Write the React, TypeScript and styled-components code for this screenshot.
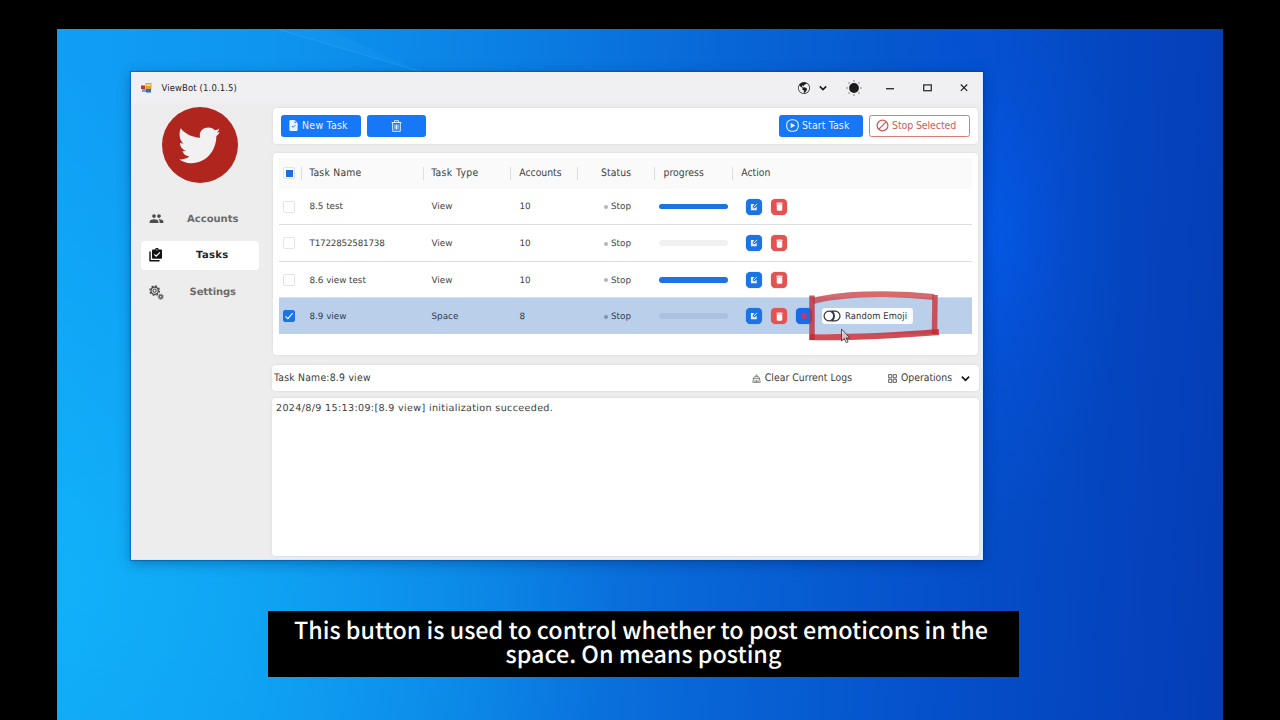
import React from "react";
import styled, { createGlobalStyle, css } from "styled-components";
import { MdGroup, MdDelete } from "react-icons/md";
import { BsGlobeAmericas, BsFileEarmarkCheckFill } from "react-icons/bs";

const Global = createGlobalStyle`
  *, *::before, *::after { box-sizing: border-box; }
  html, body { margin: 0; padding: 0; background: #000; overflow: hidden; }
  body { font-family: "DejaVu Sans", Verdana, sans-serif; text-rendering: geometricPrecision; }
  svg { display: block; flex: none; }
`;

const Screen = styled.div`
  width: 1280px;
  height: 720px;
  padding: 29px 57px 0;
  background: #000;
  overflow: hidden;
`;

const Desktop = styled.div`
  position: relative;
  height: 691px;
  overflow: hidden;
  background:
    radial-gradient(ellipse 130px 300px at 938px 200px, rgba(4, 96, 255, 0.5), rgba(4, 92, 250, 0.18) 50%, rgba(4, 80, 230, 0) 100%),
    radial-gradient(ellipse 560px 520px at 0 80%, rgba(18, 196, 255, 0.5), rgba(18, 190, 255, 0) 100%),
    linear-gradient(93deg, #109ff5 0%, #0e95ef 18%, #0b80e4 37%, #0866d6 56%, #0552cc 74%, #0447c1 87%, #043db5 100%);
`;

const LightBeam = styled.svg`
  position: absolute;
  left: 200px;
  top: 0;
`;

const AppWindow = styled.div`
  position: absolute;
  left: 74px;
  top: 43px;
  width: 852px;
  height: 488px;
  display: flex;
  flex-direction: column;
  background: #ededee;
  border-right: 1px solid #d5ecfa;
  border-bottom: 1px solid #cdeaf8;
  box-shadow: 0 0 1px 1px rgba(0, 60, 130, 0.35), 0 3px 12px rgba(0, 20, 80, 0.35);
  color: #3c3c3c;
`;

const TitleBar = styled.div`
  height: 31px;
  flex: none;
  display: flex;
  align-items: center;
  padding: 0 14px 0 10px;
  background: #f0f0f3;
  color: #1e1e1e;
`;

const Text = styled.span<{ $size?: number; $gap?: number; $condensed?: boolean; $bold?: boolean }>`
  white-space: nowrap;
  line-height: 1.2;
  font-size: ${(p) => p.$size ?? 8.8}px;
  letter-spacing: ${(p) => p.$gap ?? 0}px;
  font-weight: ${(p) => (p.$bold ? 700 : 400)};
  ${(p) => p.$condensed && css`font-family: "DejaVu Sans Condensed", "DejaVu Sans", sans-serif; font-stretch: condensed;`}
`;

const AppTitle = styled(Text)`
  margin-left: 9.5px;
  padding-top: 2px;
  flex: 1;
`;

const WindowControls = styled.div`
  display: flex;
  align-items: center;
  color: #1c1c1c;
`;

const Control = styled.span<{ $before: number }>`
  margin-left: ${(p) => p.$before}px;
`;

const Body = styled.div`
  flex: 1;
  display: flex;
  min-height: 0;
`;

const Sidebar = styled.nav`
  width: 141px;
  flex: none;
  padding: 4px 13px 0 10px;
`;

const Logo = styled.div`
  width: 76px;
  height: 76px;
  margin: 0 0 21px 20.5px;
  border-radius: 50%;
  background: #b0261e;
  color: #f1f1f1;
  display: grid;
  place-items: center;
`;

const NavItem = styled.div<{ $active?: boolean }>`
  height: 29px;
  margin-bottom: 7.8px;
  display: flex;
  align-items: center;
  padding-left: 8px;
  border-radius: 4px;
  background: ${(p) => (p.$active ? "#fff" : "transparent")};
  color: ${(p) => (p.$active ? "#1a1a1a" : "#4c4c4c")};
`;

const NavLabel = styled(Text)<{ $active?: boolean }>`
  flex: 1;
  text-align: center;
  padding: 2px 0 0 2.5px;
  color: ${(p) => (p.$active ? "#262626" : "#6c6c6c")};
`;

const Main = styled.main`
  flex: 1;
  min-width: 0;
  display: flex;
  flex-direction: column;
  padding: 5px 3px 3px 0;
`;

const Panel = styled.section`
  background: #fff;
  border-radius: 4px;
  box-shadow: 0 0 3px rgba(0, 0, 0, 0.1);
`;

const Toolbar = styled(Panel)`
  height: 36px;
  margin: 0 1px 9px 1px;
  display: flex;
  align-items: center;
  padding: 0 8px;
  gap: 6px;
`;

const Spacer = styled.div`
  flex: 1;
`;

const Button = styled.button<{ $width: number; $outline?: boolean }>`
  width: ${(p) => p.$width}px;
  height: 22px;
  display: flex;
  align-items: center;
  gap: 3px;
  padding: 0 0 1px 6px;
  border-radius: 2.5px;
  font-family: inherit;
  border: 1px solid ${(p) => (p.$outline ? "#dc7a78" : "#1677f5")};
  background: ${(p) => (p.$outline ? "#fff" : "#1677f7")};
  color: ${(p) => (p.$outline ? "#cf5b58" : "#e9f4ff")};
`;

const IconButton = styled(Button)`
  justify-content: center;
  padding: 0;
`;

const TablePanel = styled(Panel)`
  height: 202px;
  margin: 0 1px 10px 1px;
  padding: 5px 6px 0;
`;

const rowGrid = css`
  display: grid;
  grid-template-columns: 21.5px 122px 87.5px 67px 77px 77.5px 1fr;
  align-items: center;
`;

const HeadRow = styled.div`
  ${rowGrid}
  height: 30.6px;
  background: #fafafa;
`;

const Row = styled.div<{ $selected?: boolean }>`
  ${rowGrid}
  height: 36.6px;
  padding-top: 0.5px;
  border-bottom: 1px solid ${(p) => (p.$selected ? "#bad0ea" : "#dedede")};
  background: ${(p) => (p.$selected ? "#bad0ea" : "#fff")};
  color: ${(p) => (p.$selected ? "#303c50" : "#444")};
  &:last-child { height: 36px; }
`;

const HeadCell = styled.div<{ $pad?: number; $center?: boolean }>`
  height: 13px;
  display: flex;
  align-items: center;
  justify-content: ${(p) => (p.$center ? "center" : "flex-start")};
  padding-left: ${(p) => p.$pad ?? 7.7}px;
  border-left: 1px solid #dedede;
`;

const Cell = styled.div<{ $pad?: number }>`
  display: flex;
  align-items: center;
  padding-left: ${(p) => p.$pad ?? 9}px;
`;

const RowText = styled(Text)`
  padding-top: 2px;
`;

const CheckBox = styled.div<{ $checked?: boolean }>`
  width: 12px;
  height: 12px;
  margin-left: 4px;
  display: grid;
  place-items: center;
  border-radius: 2px;
  border: 1px solid ${(p) => (p.$checked ? "#1b74e4" : "#e4e4e4")};
  background: ${(p) => (p.$checked ? "#1b74e4" : "#fff")};
`;

const PartialMark = styled.div`
  width: 7px;
  height: 7px;
  background: #1b70de;
`;

const StatusDot = styled.i<{ $selected?: boolean }>`
  width: 4px;
  height: 4px;
  margin: 1px 3.5px 0 0;
  border-radius: 50%;
  background: ${(p) => (p.$selected ? "#7d93b2" : "#b4b4b4")};
`;

const Progress = styled.div<{ $full?: boolean; $selected?: boolean }>`
  width: 69px;
  height: 5.5px;
  border-radius: 3px;
  background: ${(p) => (p.$full ? "#1b74e2" : p.$selected ? "#abc2de" : "#f0f0f0")};
`;

const Action = styled.span<{ $color: string }>`
  width: 16px;
  height: 16px;
  margin-right: 9.2px;
  flex: none;
  display: grid;
  place-items: center;
  border-radius: 4.5px;
  background: ${(p) => p.$color};
  box-shadow: 0 0 1px ${(p) => p.$color};
  color: #fff;
`;

const EmojiToggle = styled.div`
  width: 91px;
  height: 16px;
  flex: none;
  display: flex;
  align-items: center;
  gap: 4px;
  padding-left: 1.5px;
  border-radius: 3px;
  background: #f9fbfe;
  color: #333;
`;

const LogHeader = styled(Panel)`
  height: 26px;
  margin-bottom: 7px;
  display: flex;
  align-items: center;
  padding: 0 9px 0 2px;
`;

const HeaderAction = styled.div<{ $after?: number }>`
  display: flex;
  align-items: center;
  gap: 4px;
  margin: 1px ${(p) => p.$after ?? 0}px 0 0;
`;

const LogBody = styled(Panel)`
  flex: 1;
  padding: 2px 4px;
  line-height: 12px;
`;

const Markup = styled.svg`
  position: absolute;
  left: 745px;
  top: 255px;
`;

const Caption = styled.p`
  position: absolute;
  left: 211px;
  top: 582px;
  width: 751px;
  height: 66px;
  margin: 0;
  padding-top: 6px;
  background: #000;
  color: #fff;
  font: 500 23.3px/24px "Noto Sans CJK SC", sans-serif;
  text-align: center;
  white-space: nowrap;
`;

const CaptionLine = styled.span<{ $trail?: number }>`
  display: block;
  height: 24px;
  padding-right: ${(p) => p.$trail ?? 0}px;
`;

const AppIcon = () => (
  <svg width="11" height="10" viewBox="0 0 11 10">
    <rect x="4.5" y="0" width="6" height="6.5" fill="#d9a52c" />
    <rect x="5.5" y="1" width="4" height="2" fill="#f8dc78" />
    <rect x="0" y="2.5" width="4" height="3.5" fill="#c0392e" />
    <rect x="1" y="6" width="4" height="3" fill="#77a4e6" />
    <rect x="5" y="6" width="5" height="3.5" fill="#3a68bd" />
  </svg>
);

const Bird = () => (
  <svg width="41" height="37" viewBox="148 175 124 111" fill="currentColor">
    <path d="M153 178C166 195 188 205 212 207C207 190 219 176 237 176C245 176 252 179 256 184C261 184 266 182 270 179C269 185 266 189 262 192L271 190C269 195 265 199 261 202C261 250 226 285 185 284C170 284 157 279 148 272C161 274 171 270 179 264C168 262 161 256 158 248L170 247C158 243 151 234 151 222L162 225C150 216 146 197 153 178Z" />
  </svg>
);

const Chevron = ({ size = 8 }: { size?: number }) => (
  <svg width={size} height={size} viewBox="0 0 8 8" fill="none" stroke="#151515" strokeWidth="1.5">
    <path d="M.8 2.4 4 5.6l3.2-3.2" />
  </svg>
);

const SunIcon = () => (
  <svg width="16" height="16" viewBox="0 0 16 16" fill="#1b1b1b">
    <circle cx="8" cy="8" r="4.9" />
    {[0, 45, 90, 135, 180, 225, 270, 315].map((a) => (
      <rect key={a} x="7.5" y=".4" width="1" height="1.2" opacity=".8" transform={`rotate(${a} 8 8)`} />
    ))}
  </svg>
);

const TasksIcon = () => (
  <svg width="14" height="14" viewBox="0 0 14 14">
    <path d="M1 3.6v9.2h9.6" fill="none" stroke="#111" strokeWidth="1.4" />
    <path d="M4 1.6h2.2a1.7 1.7 0 0 1 3.4 0H12a1 1 0 0 1 1 1v7.2a1 1 0 0 1-1 1H4a1 1 0 0 1-1-1V2.6a1 1 0 0 1 1-1z" fill="#111" />
    <circle cx="7.9" cy="1.9" r=".6" fill="#fff" />
    <path d="m5.3 6.3 1.9 1.9 3.7-3.8" fill="none" stroke="#fff" strokeWidth="1.2" />
  </svg>
);

const SettingsIcon = () => (
  <svg width="15" height="15" viewBox="0 0 16 16" fill="none" stroke="#4a4a4a">
    <circle cx="6" cy="6" r="3.9" strokeWidth="1.4" />
    <circle cx="6" cy="6" r="1.7" strokeWidth="1.1" />
    <circle cx="6" cy="6" r="5.1" strokeWidth="1.4" strokeDasharray="2 2" />
    <circle cx="12.5" cy="12.5" r="1.7" strokeWidth="1.8" stroke="#666" />
    <circle cx="12.5" cy="12.5" r="2.9" strokeWidth=".9" strokeDasharray="1.1 1.17" stroke="#666" />
  </svg>
);

const TrashOutline = () => (
  <svg width="11" height="12" viewBox="0 0 11 12" fill="none" stroke="currentColor">
    <path d="M.6 2.5h9.8M3.5 2.3V.7h4v1.6M1.7 2.5v8.8h7.600V2.5M4 4.5v5M5.5 4.5v5M7 4.5v5" strokeWidth=".95" />
  </svg>
);

const PlayIcon = () => (
  <svg width="13" height="13" viewBox="0 0 13 13" fill="none" stroke="currentColor">
    <rect x=".7" y=".7" width="11.6" height="11.6" rx="5" strokeWidth="1.1" />
    <path d="M4.6 3.7v5.6l4.7-2.8z" fill="currentColor" stroke="none" />
  </svg>
);

const StopIcon = () => (
  <svg width="13" height="13" viewBox="0 0 13 13" fill="none" stroke="currentColor" strokeWidth="1.3">
    <circle cx="6.5" cy="6.5" r="5.4" />
    <path d="m2.9 10.1 7.2-7.2" />
  </svg>
);

const EditIcon = () => (
  <svg width="8" height="8" viewBox="0 0 8 8">
    <path d="M.9 1h3.5L2.8 3v2.2H5l1.7-1.8v3.9H.9z" fill="#e9f3ff" />
    <path d="M3.6 4.4 7 .9" stroke="#e9f3ff" strokeWidth="1" />
  </svg>
);

const ToggleIcon = () => (
  <svg width="18" height="12" viewBox="0 0 18 12" fill="none" stroke="#333" strokeWidth="1.2">
    <circle cx="5.9" cy="6" r="4.8" />
    <path d="M9 1.2h3.2a4.8 4.8 0 0 1 0 9.6H9a6 6 0 0 0 0-9.6z" />
  </svg>
);

const ClearIcon = () => (
  <svg width="9" height="9" viewBox="0 0 10 10" fill="none" stroke="#555" strokeWidth=".8">
    <path d="M3.600 3 5 .8 6.400 3M1.400 5.200C1.600 3.700 2.500 3 4 3h2c1.500 0 2.400.7 2.600 2.200zM1.600 5.200.9 9.200h8.200l-.7-4M3.400 7v2.200M5 7v2.200M6.600 7v2.200" />
  </svg>
);

const GridIcon = () => (
  <svg width="9" height="9" viewBox="0 0 10 10" fill="none" stroke="#444" strokeWidth=".95">
    <path d="M.7.7h3.5v3.5H.7zM5.8.7h3.5v3.5H5.8zM.7 5.8h3.5v3.5H.7zM5.8 5.8h3.5v3.5H5.8z" />
  </svg>
);

interface Task {
  name: string;
  type: string;
  accounts: number;
  done?: boolean;
  selected?: boolean;
}

const tasks: Task[] = [
  { name: "8.5 test", type: "View", accounts: 10, done: true },
  { name: "T1722852581738", type: "View", accounts: 10 },
  { name: "8.6 view test", type: "View", accounts: 10, done: true },
  { name: "8.9 view", type: "Space", accounts: 8, selected: true },
];

const TaskRow = ({ task }: { task: Task }) => (
  <Row $selected={task.selected}>
    <CheckBox $checked={task.selected}>
      {task.selected && (
        <svg width="10" height="10" viewBox="0 0 10 10" fill="none" stroke="#fff" strokeWidth="1.1">
          <path d="m1.5 5.3 2.4 2.3L8.6 2.2" />
        </svg>
      )}
    </CheckBox>
    <Cell><RowText $gap={task.name.length > 13 ? -0.22 : -0.03}>{task.name}</RowText></Cell>
    <Cell><RowText>{task.type}</RowText></Cell>
    <Cell $pad={9.5}><RowText $gap={-0.2}>{task.accounts}</RowText></Cell>
    <Cell $pad={26.5}>
      <StatusDot $selected={task.selected} />
      <RowText>Stop</RowText>
    </Cell>
    <Cell $pad={5}><Progress $full={task.done} $selected={task.selected} /></Cell>
    <Cell $pad={14.5}>
      <Action $color="#1b74e4"><EditIcon /></Action>
      <Action $color="#e55252"><MdDelete size={11} /></Action>
      {task.selected && (
        <>
          <Action $color="#1b6ce4">
            <svg width="8" height="8" viewBox="0 0 8 8"><circle cx="4" cy="4" r="3" fill="#c43770" /></svg>
          </Action>
          <EmojiToggle>
            <ToggleIcon />
            <Text $size={9.3} $condensed $gap={0.13}>Random Emoji</Text>
          </EmojiToggle>
        </>
      )}
    </Cell>
  </Row>
);

const HeadText = ({ children, gap = 0.15 }: { children: string; gap?: number }) => (
  <Text $size={10.3} $condensed $gap={gap}>{children}</Text>
);

export default function App() {
  return (
    <Screen>
      <Global />
      <Desktop>
        <LightBeam width="220" height="45" viewBox="0 0 220 45">
          <path d="M20 0h50l95 43z" fill="#27a8fa" opacity=".14" />
          <path d="M20 0 165 43" stroke="#41b8ff" strokeWidth="1" opacity=".3" />
        </LightBeam>
        <AppWindow>
          <TitleBar>
            <AppIcon />
            <AppTitle $size={9.4} $condensed $gap={0.15}>ViewBot (1.0.1.5)</AppTitle>
            <WindowControls>
              <BsGlobeAmericas size={12} />
              <Control $before={9}><Chevron /></Control>
              <Control $before={18.5}><SunIcon /></Control>
              <Control $before={24.5}>
                <svg width="8" height="8" viewBox="0 0 8 8"><path d="M0 4.7h8" stroke="#333" strokeWidth="1.4" /></svg>
              </Control>
              <Control $before={28.5}>
                <svg width="9" height="8" viewBox="0 0 9 8"><rect x=".7" y=".9" width="7.6" height="5.8" fill="none" stroke="#333" strokeWidth="1.3" /></svg>
              </Control>
              <Control $before={28.5}>
                <svg width="8" height="8" viewBox="0 0 8 8"><path d="m.8.5 6.4 6.4m0-6.4L.8 6.9" stroke="#222" strokeWidth="1.2" /></svg>
              </Control>
            </WindowControls>
          </TitleBar>
          <Body>
            <Sidebar>
              <Logo><Bird /></Logo>
              <NavItem>
                <MdGroup size={15} />
                <NavLabel $size={10} $bold>Accounts</NavLabel>
              </NavItem>
              <NavItem $active>
                <TasksIcon />
                <NavLabel $size={10} $bold $active $gap={0.3}>Tasks</NavLabel>
              </NavItem>
              <NavItem>
                <SettingsIcon />
                <NavLabel $size={10} $bold $gap={-0.1}>Settings</NavLabel>
              </NavItem>
            </Sidebar>
            <Main>
              <Toolbar>
                <Button $width={80}>
                  <BsFileEarmarkCheckFill size={11} />
                  <Text $size={10.5} $condensed $gap={0.25}>New Task</Text>
                </Button>
                <IconButton $width={59}><TrashOutline /></IconButton>
                <Spacer />
                <Button $width={84}>
                  <PlayIcon />
                  <Text $size={10.5} $condensed $gap={0.12}>Start Task</Text>
                </Button>
                <Button $width={101} $outline>
                  <StopIcon />
                  <Text $size={10.5} $condensed $gap={-0.1}>Stop Selected</Text>
                </Button>
              </Toolbar>
              <TablePanel>
                <HeadRow>
                  <CheckBox><PartialMark /></CheckBox>
                  <HeadCell><HeadText gap={0.25}>Task Name</HeadText></HeadCell>
                  <HeadCell><HeadText gap={0.4}>Task Type</HeadText></HeadCell>
                  <HeadCell $pad={8.3}><HeadText gap={0}>Accounts</HeadText></HeadCell>
                  <HeadCell $center $pad={0}><HeadText gap={0.1}>Status</HeadText></HeadCell>
                  <HeadCell $pad={8.5}><HeadText gap={0.05}>progress</HeadText></HeadCell>
                  <HeadCell $pad={8.8}><HeadText gap={0}>Action</HeadText></HeadCell>
                </HeadRow>
                {tasks.map((t) => <TaskRow key={t.name} task={t} />)}
              </TablePanel>
              <LogHeader>
                <HeadText gap={0.25}>Task Name:8.9 view</HeadText>
                <Spacer />
                <HeaderAction $after={36}>
                  <ClearIcon />
                  <HeadText gap={0.06}>Clear Current Logs</HeadText>
                </HeaderAction>
                <HeaderAction>
                  <GridIcon />
                  <HeadText gap={0}>Operations</HeadText>
                  <Control $before={5}><Chevron size={9} /></Control>
                </HeaderAction>
              </LogHeader>
              <LogBody>
                <Text $size={9.6} $gap={0.33}>2024/8/9 15:13:09:[8.9 view] initialization succeeded.</Text>
              </LogBody>
            </Main>
          </Body>
        </AppWindow>
        <Markup width="150" height="65" viewBox="802 284 150 65">
          <path d="M813 301C838 294 890 292 934 297" fill="none" stroke="#c94a50" strokeWidth="6" opacity=".82" />
          <path d="M812 295.5 812 340" fill="none" stroke="#bd2f3d" strokeWidth="5.5" opacity=".82" />
          <path d="M935 295 934.5 334" fill="none" stroke="#c53d45" strokeWidth="5.5" opacity=".85" />
          <path d="M809.5 337C850 338 900 335 939 332" fill="none" stroke="#c6262f" strokeWidth="6" opacity=".82" />
          <path d="M841.5 329v12l2.8-2.5 1.9 4.2 1.9-.9-1.9-3.9h3.6z" fill="#e8dfe5" fillOpacity=".75" stroke="#333" strokeWidth=".8" />
        </Markup>
        <Caption>
          <CaptionLine $trail={5}>This button is used to control whether to post emoticons in the</CaptionLine>
          <CaptionLine>space. On means posting</CaptionLine>
        </Caption>
      </Desktop>
    </Screen>
  );
}
